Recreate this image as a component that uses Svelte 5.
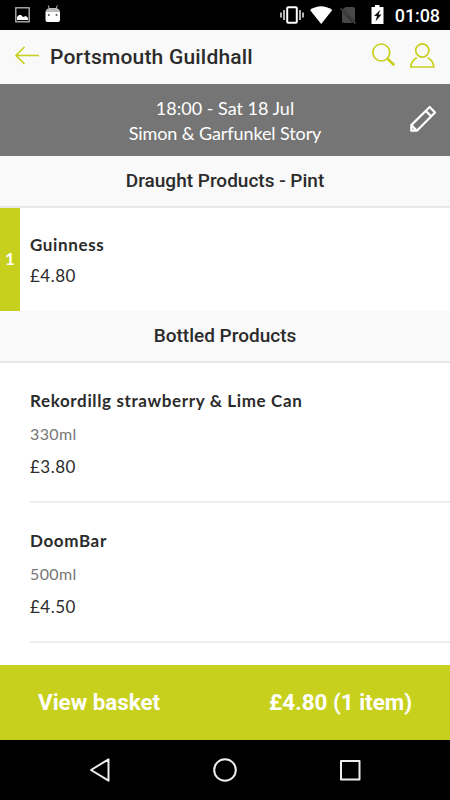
<script lang="ts">
  // Bar menu for a venue: event banner, product sections and the basket bar at the bottom.
  type Product = { name: string; size?: string; price: string; count?: number };
  type Section = { title: string; products: Product[] };

  const sections: Section[] = [
    {
      title: "Draught Products - Pint",
      products: [{ name: "Guinness", price: "£4.80", count: 1 }],
    },
    {
      title: "Bottled Products",
      products: [
        { name: "Rekordillg strawberry & Lime Can", size: "330ml", price: "£3.80" },
        { name: "DoomBar", size: "500ml", price: "£4.50" },
      ],
    },
  ];
</script>

<div class="screen">
  <div class="status">
    <svg width="450" height="30" viewBox="0 0 450 30" aria-hidden="true">
      <rect x="15.8" y="7.8" width="13.4" height="14" fill="none" stroke="#bbb" stroke-width="1.3" />
      <path d="M17 20v-3l2-2h2l2 2 3-1 2 2v2z" fill="#fff" />
      <path d="M45.500 12h14.500v8q0 2-2 2h-10.500q-2 0-2-2z" fill="#fff" />
      <path d="M45.500 12q.5-3.500 4-4h6.500q3.500.5 4 4z" fill="#bbb" />
      <path d="M49.500 9l-1.300-3.500M56 9l1.300-3.500" stroke="#bbb" stroke-width="1" />
      <circle cx="48.800" cy="15" r="1" fill="#555" />
      <circle cx="56.500" cy="15" r="1" fill="#555" />
      <rect x="287.200" y="7.200" width="9.600" height="15.600" rx="1" fill="none" stroke="#fff" stroke-width="2" />
      <path d="M284 10v10M281 12.500v5M300 10v10M303 12.500v5" stroke="#eee" stroke-width="1.500" />
      <path d="M310 10q11-7.500 22.300 0L321.200 24z" fill="#fff" />
      <path d="M346 7h7q2 0 2 2v12.500L342.500 9zM342 11l11 12h-9q-2 0-2-2z" fill="#484848" />
      <path d="M340.500 8.500l15 15" stroke="#555" stroke-width="1.200" />
      <path d="M371.500 7h3.500V5h4.500v2h4v17h-12z" fill="#fff" />
      <path d="M380.500 9.500l-6.500 6.500h3l-1.500 5.500 6-7h-3z" fill="#111" />
    </svg>
    <span class="clock">01:08</span>
  </div>

  <header>
    <button type="button" aria-label="back">
      <svg width="26" height="22" viewBox="0 0 26 22">
        <path d="M10.500 2L2 10.500l8.500 8.500M2 10.500h23" />
      </svg>
    </button>
    <h1>Portsmouth Guildhall</h1>
    <button type="button" aria-label="search">
      <svg width="26" height="26" viewBox="0 0 26 26">
        <circle cx="10.300" cy="9.500" r="8.500" />
        <path class="handle" d="M16.500 15.700l6.800 6.500" />
      </svg>
    </button>
    <button class="account" type="button" aria-label="account">
      <svg width="28" height="28" viewBox="0 0 28 28">
        <circle cx="14.300" cy="8.500" r="6.600" />
        <path d="M8.800 15.800Q3.500 18.500 2.700 25h23.200Q25.100 18.500 19.800 15.800" />
      </svg>
    </button>
  </header>

  <div class="event">
    <div>18:00 - Sat 18 Jul</div>
    <div class="show">Simon &amp; Garfunkel Story</div>
    <button class="edit" type="button" aria-label="edit">
      <svg width="28" height="28" viewBox="0 0 28 28">
        <path d="M2.300 25.700v-5.600L20.700 2l5.300 5.400L7.900 25.700zM2.300 20.100l5.600 5.600M16.800 5.900l5.300 5.300" />
      </svg>
    </button>
  </div>

  <main>
    {#each sections as section}
      <h2>{section.title}</h2>
      {#each section.products as product}
        <div class="product" class:selected={product.count}>
          {#if product.count}<span class="count">{product.count}</span>{/if}
          <div class="info">
            <div class="name">{product.name}</div>
            {#if product.size}<div class="size">{product.size}</div>{/if}
            <div class="price">{product.price}</div>
          </div>
        </div>
      {/each}
    {/each}
  </main>

  <button class="basket" type="button">
    <span class="view">View basket</span>
    <span>£4.80 (1 item)</span>
  </button>

  <nav>
    <svg width="24" height="26" viewBox="0 0 24 26"><path d="M3 13L20.500 2.300v21.400z" /></svg>
    <svg width="26" height="26" viewBox="0 0 26 26"><circle cx="13" cy="13" r="10.800" /></svg>
    <svg width="24" height="26" viewBox="0 0 24 26"><rect x="3" y="4" width="18.500" height="18.500" /></svg>
  </nav>
</div>

<style>
  .screen {
    display: flex;
    flex-direction: column;
    width: 450px;
    height: 800px;
    overflow: hidden;
    background: #fff;
    color: #2b2b2b;
    font-family: Roboto, sans-serif;
  }
  button {
    padding: 0;
    border: 0;
    background: none;
    font: inherit;
    cursor: pointer;
  }
  svg {
    display: block;
  }
  .status {
    position: relative;
    flex: none;
    height: 30px;
    background: #000;
  }
  .clock {
    position: absolute;
    right: 10px;
    top: 5px;
    color: #fff;
    font-size: 18px;
    font-weight: 500;
    line-height: 22px;
    letter-spacing: -0.1px;
  }
  header {
    display: flex;
    align-items: center;
    flex: none;
    box-sizing: border-box;
    height: 54px;
    padding: 0 14px 2px 14px;
    background: #f9f9f9;
  }
  header svg {
    fill: none;
    stroke: #c8d01e;
    stroke-width: 1.7;
  }
  header .handle {
    stroke-width: 2.6;
  }
  .account {
    margin-left: 11px;
  }
  h1 {
    flex: 1;
    margin: 2px 0 0 10px;
    font-size: 21px;
    font-weight: 500;
    line-height: 26px;
    letter-spacing: 0.2px;
    white-space: nowrap;
  }
  .event {
    position: relative;
    flex: none;
    box-sizing: border-box;
    height: 72px;
    padding-top: 12px;
    background: #757575;
    color: #fff;
    font-family: Lato, sans-serif;
    font-size: 18px;
    line-height: 25px;
    text-align: center;
  }
  .show {
    letter-spacing: -0.1px;
  }
  .edit {
    position: absolute;
    right: 13px;
    top: 21px;
  }
  .edit svg {
    fill: none;
    stroke: #fff;
    stroke-width: 2.2;
    stroke-linejoin: round;
  }
  main {
    flex: 1;
    min-height: 0;
    overflow: hidden;
  }
  h2 {
    box-sizing: border-box;
    height: 52px;
    margin: 0;
    border-bottom: 2px solid #e9e9e9;
    background: #f9f9f9;
    font-size: 19px;
    font-weight: 500;
    line-height: 50px;
    text-align: center;
  }
  .product {
    display: flex;
    font-family: Lato, sans-serif;
  }
  .count {
    display: flex;
    align-items: center;
    justify-content: center;
    box-sizing: border-box;
    width: 20px;
    padding-bottom: 2px;
    background: #c8d01e;
    color: #fff;
    font-size: 17px;
    font-weight: 700;
  }
  .info {
    flex: 1;
    box-sizing: border-box;
    height: 140px;
    margin-left: 30px;
    padding-top: 24px;
    border-bottom: 2px solid #eee;
  }
  .selected .info {
    height: 103px;
    margin-left: 10px;
    padding-top: 23px;
    border-bottom: 0;
  }
  .name {
    font-size: 17px;
    font-weight: 700;
    line-height: 28px;
    letter-spacing: 0.63px;
  }
  .size {
    margin-top: 5px;
    color: #777;
    font-size: 16px;
    line-height: 28px;
    letter-spacing: 0.4px;
  }
  .price {
    margin-top: 5px;
    font-size: 17px;
    line-height: 28px;
    letter-spacing: 0.5px;
  }
  .selected .price {
    margin-top: 3px;
  }
  .basket {
    display: flex;
    align-items: center;
    justify-content: space-between;
    flex: none;
    box-sizing: border-box;
    height: 75px;
    padding: 0 38px 2px;
    background: #c8d01e;
    color: #fff;
    font-size: 22.4px;
    font-weight: 700;
  }
  nav {
    display: flex;
    align-items: center;
    justify-content: space-between;
    flex: none;
    box-sizing: border-box;
    height: 60px;
    padding: 0 88px;
    background: #000;
  }
  nav svg {
    fill: none;
    stroke: #eee;
    stroke-width: 2;
    stroke-linejoin: round;
  }
</style>
